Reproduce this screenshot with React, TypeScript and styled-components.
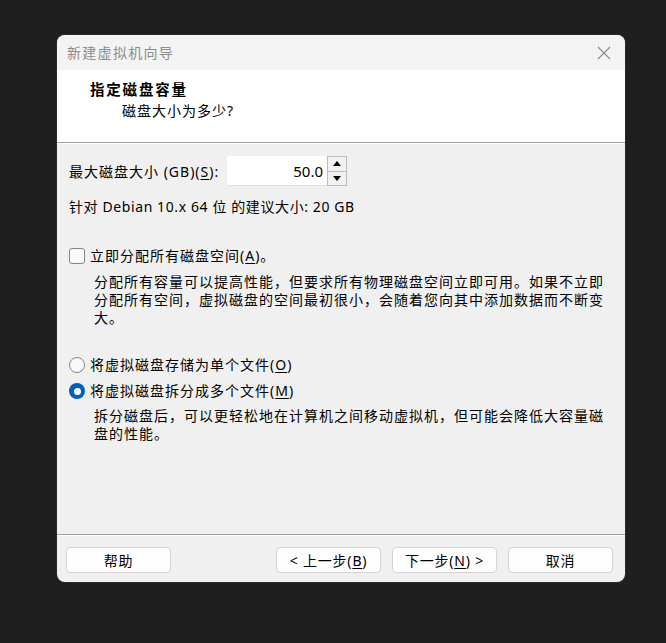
import React from "react";
import styled, { createGlobalStyle } from "styled-components";

const Global = createGlobalStyle`
  html, body { margin: 0; padding: 0; background: #1f1f1f; }
  body { font-family: "Noto Sans", "Noto Sans CJK SC", sans-serif; }
`;

const Page = styled.div`
  padding: 35px 0 0 57px;
  height: 643px;
  box-sizing: border-box;
`;

const Window = styled.div`
  width: 568px;
  height: 547px;
  border-radius: 8px;
  overflow: hidden;
  background: #f0f0f0;
  display: flex;
  flex-direction: column;
  font-family: "Noto Sans", "Noto Sans CJK SC", sans-serif;
  font-size: 14px;
  color: #000;
  box-shadow: 0 0 0 1px #2a2a2a;
`;

const TitleBar = styled.div`
  height: 35px;
  background: #f3f3f3;
  display: flex;
  align-items: center;
  justify-content: space-between;
  padding: 0 14px 0 10px;
  flex-shrink: 0;
`;

const Title = styled.span`
  color: #8c8c8c;
  font-size: 14px;
  line-height: 18px;
  letter-spacing: 1.3px;
`;

const Header = styled.div`
  height: 73px;
  background: #fff;
  box-sizing: border-box;
  padding: 9px 0 0 33px;
  border-bottom: 1px solid #a0a0a0;
  flex-shrink: 0;
`;

const HeaderTitle = styled.div`
  font-weight: 700;
  font-size: 14.5px;
  line-height: 20px;
  letter-spacing: 1.8px;
`;

const HeaderSub = styled.div`
  padding-left: 32px;
  font-size: 14px;
  line-height: 20px;
  margin-top: 2px;
  letter-spacing: 1px;
`;

const Body = styled.div`
  flex: 1;
  border-top: 1px solid #fff;
  padding: 12px 12px 0 12px;
  display: flex;
  flex-direction: column;
`;

const Line = styled.div<{ $top?: number }>`
  font-size: 14px;
  line-height: 18px;
  margin-top: ${(p) => p.$top ?? 0}px;
  letter-spacing: 0.6px;
`;

const SizeRow = styled.div`
  display: flex;
  align-items: center;
  height: 30px;
`;

const SizeLabel = styled.span`
  width: 158px;
  font-size: 14px;
  letter-spacing: 1px;
`;

const NumberBox = styled.div`
  width: 100px;
  height: 30px;
  background: #fff;
  box-sizing: border-box;
  border-bottom: 1px solid #e0e0e0;
  display: flex;
  align-items: center;
  justify-content: flex-end;
  padding-right: 4px;
  font-size: 15px;
`;

const Spinner = styled.div`
  width: 20px;
  height: 30px;
  display: flex;
  flex-direction: column;
`;

const SpinBtn = styled.div`
  flex: 1;
  border: 1px solid #bcbcbc;
  background: #f2f2f2;
  display: flex;
  align-items: center;
  justify-content: center;
  & + & { border-top: none; }
`;

const Desc = styled.div<{ $top: number }>`
  padding-left: 25px;
  margin-top: ${(p) => p.$top}px;
  font-size: 14px;
  line-height: 18px;
  letter-spacing: 1px;
  width: 520px;
`;

const OptionRow = styled.label<{ $top: number }>`
  display: flex;
  align-items: center;
  gap: 5px;
  margin-top: ${(p) => p.$top}px;
  font-size: 14px;
  line-height: 18px;
  letter-spacing: 1px;
`;

const CheckBox = styled.span`
  width: 16px;
  height: 16px;
  box-sizing: border-box;
  border: 1px solid #858585;
  border-radius: 3px;
  background: #f9f9f9;
  flex-shrink: 0;
`;

const Radio = styled.span<{ $on?: boolean }>`
  width: 16px;
  height: 16px;
  box-sizing: border-box;
  border-radius: 50%;
  flex-shrink: 0;
  border: ${(p) => (p.$on ? "none" : "1px solid #858585")};
  background: ${(p) => (p.$on ? "#005fb8" : "#f9f9f9")};
  display: flex;
  align-items: center;
  justify-content: center;
  &::after {
    content: "";
    display: ${(p) => (p.$on ? "block" : "none")};
    width: 7px;
    height: 7px;
    border-radius: 50%;
    background: #fff;
  }
`;

const U = styled.span`
  text-decoration: underline;
  text-underline-offset: 2px;
`;

const Footer = styled.div`
  flex-shrink: 0;
  border-top: 1px solid #a0a0a0;
  box-shadow: inset 0 1px 0 #fff;
  padding: 12px 12px 9px 9px;
  display: flex;
  align-items: center;
`;

const Btn = styled.button<{ $gapLeft?: number }>`
  width: 105px;
  height: 26px;
  margin-left: ${(p) => p.$gapLeft ?? 0}px;
  background: #fdfdfd;
  border: 1px solid #d3d3d3;
  border-radius: 4px;
  font-family: "Noto Sans", "Noto Sans CJK SC", sans-serif;
  font-size: 14px;
  color: #000;
  padding: 0;
  letter-spacing: 0.8px;
`;

const Spacer = styled.div`
  flex: 1;
`;

export default function App() {
  return (
    <>
      <Global />
      <Page>
        <Window>
          <TitleBar>
            <Title>新建虚拟机向导</Title>
            <svg width="14" height="14" viewBox="0 0 14 14">
              <path d="M1 1 L13 13 M13 1 L1 13" stroke="#8a8a8a" strokeWidth="1.1" />
            </svg>
          </TitleBar>
          <Header>
            <HeaderTitle>指定磁盘容量</HeaderTitle>
            <HeaderSub>磁盘大小为多少?</HeaderSub>
          </Header>
          <Body>
            <SizeRow>
              <SizeLabel>
                最大磁盘大小 (GB)(<U>S</U>):
              </SizeLabel>
              <NumberBox>50.0</NumberBox>
              <Spinner>
                <SpinBtn>
                  <svg width="8" height="5" viewBox="0 0 8 5">
                    <path d="M0 5 L4 0 L8 5 Z" fill="#000" />
                  </svg>
                </SpinBtn>
                <SpinBtn>
                  <svg width="8" height="5" viewBox="0 0 8 5">
                    <path d="M0 0 L4 5 L8 0 Z" fill="#000" />
                  </svg>
                </SpinBtn>
              </Spinner>
            </SizeRow>
            <Line $top={12}>针对 Debian 10.x 64 位 的建议大小: 20 GB</Line>
            <OptionRow $top={31}>
              <CheckBox />
              <span>
                立即分配所有磁盘空间(<U>A</U>)。
              </span>
            </OptionRow>
            <Desc $top={8}>
              分配所有容量可以提高性能，但要求所有物理磁盘空间立即可用。如果不立即分配所有空间，虚拟磁盘的空间最初很小，会随着您向其中添加数据而不断变大。
            </Desc>
            <OptionRow $top={29}>
              <Radio />
              <span>
                将虚拟磁盘存储为单个文件(<U>O</U>)
              </span>
            </OptionRow>
            <OptionRow $top={8}>
              <Radio $on />
              <span>
                将虚拟磁盘拆分成多个文件(<U>M</U>)
              </span>
            </OptionRow>
            <Desc $top={7}>
              拆分磁盘后，可以更轻松地在计算机之间移动虚拟机，但可能会降低大容量磁盘的性能。
            </Desc>
          </Body>
          <Footer>
            <Btn>帮助</Btn>
            <Spacer />
            <Btn>
              &lt; 上一步(<U>B</U>)
            </Btn>
            <Btn $gapLeft={11}>
              下一步(<U>N</U>) &gt;
            </Btn>
            <Btn $gapLeft={11}>取消</Btn>
          </Footer>
        </Window>
      </Page>
    </>
  );
}
